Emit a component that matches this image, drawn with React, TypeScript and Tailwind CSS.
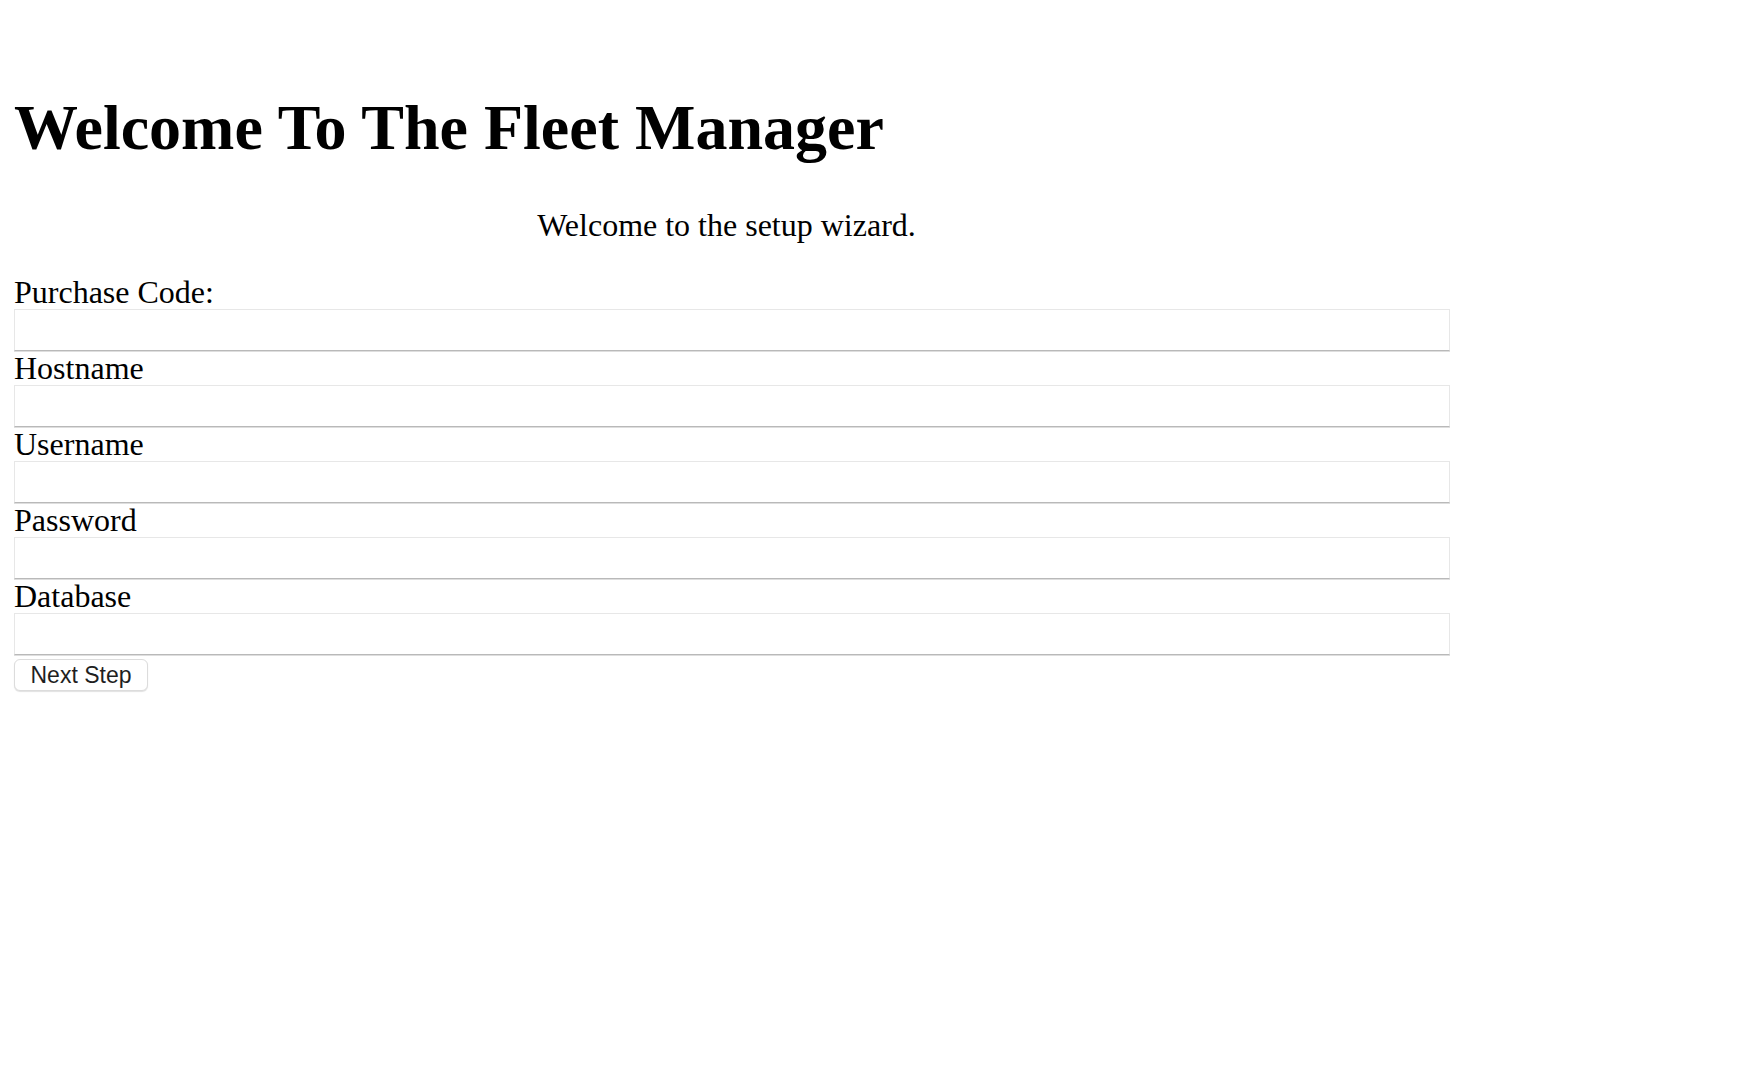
const fields = ["Purchase Code:", "Hostname", "Username", "Password", "Database"];

export default function App() {
  return (
    <main className="min-h-screen bg-white px-[14px] pt-[91px] font-['Liberation_Serif',serif] text-black">
      <h1 className="text-[64px] leading-[74px] font-bold">Welcome To The Fleet Manager</h1>

      <div className="w-[1436px]">
        <p className="mt-[42px] pr-[11px] text-center text-[32px] leading-[37px]">
          Welcome to the setup wizard.
        </p>

        <form className="mt-[31px] flex flex-col">
          {fields.map((label) => (
            <label key={label} className="flex flex-col">
              <span className="text-[32px] leading-[34px]">{label}</span>
              <input
                type={label === "Password" ? "password" : "text"}
                className="h-[42px] w-full border border-[#e7e7e7] border-b-[#b9b9b9] bg-white shadow-[0_1px_0_#dedede] outline-none"
              />
            </label>
          ))}
          <div className="mt-[4px]">
            <button
              type="button"
              className="h-[32px] w-[134px] rounded-[6px] border border-[#dcdcdc] bg-white font-['Liberation_Sans',sans-serif] text-[23px] leading-none text-[#1f1f1f] shadow-[0_1px_1px_rgba(0,0,0,0.12)]"
            >
              Next Step
            </button>
          </div>
        </form>
      </div>
    </main>
  );
}
